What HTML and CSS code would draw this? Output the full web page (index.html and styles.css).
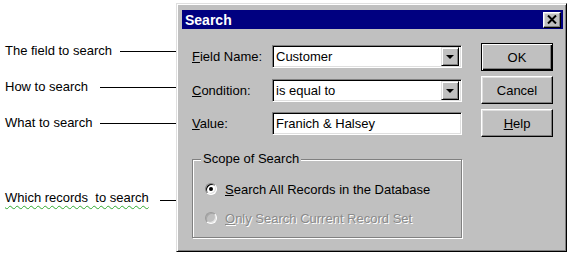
FILE: index.html
```
<!DOCTYPE html>
<html lang="en">

<head>
    <meta charset="UTF-8">
    <title>Search</title>
    <link rel="stylesheet" href="styles.css">
</head>

<body>
    <div class="notes">
        <div class="note note-field">
            <span>The field to search</span>
            <i class="note-line"></i>
        </div>
        <div class="note note-how">
            <span>How to search</span>
            <i class="note-line"></i>
        </div>
        <div class="note note-what">
            <span>What to search</span>
            <i class="note-line"></i>
        </div>
        <div class="note note-which">
            <span class="spell">Which records&nbsp; to search</span>
            <i class="note-line"></i>
        </div>
    </div>

    <div class="dialog">
        <div class="titlebar">
            <span class="title">Search</span>
            <span class="close">
                <svg width="10" height="9" viewBox="0 0 10 9">
                    <path d="M1 0.5 L9 8.5 M9 0.5 L1 8.5" stroke="#000" stroke-width="2" fill="none"/>
                </svg>
            </span>
        </div>

        <div class="body">
            <div class="form">
                <div class="row row-field">
                    <label class="label"><u>F</u>ield Name:</label>
                    <div class="field combo">
                        <span class="value">Customer</span>
                        <span class="drop">
                            <svg width="8" height="4" viewBox="0 0 8 4"><path d="M0 0 H8 L4 4 Z" fill="#000"/></svg>
                        </span>
                    </div>
                </div>
                <div class="row row-cond">
                    <label class="label"><u>C</u>ondition:</label>
                    <div class="field combo">
                        <span class="value">is equal to</span>
                        <span class="drop">
                            <svg width="8" height="4" viewBox="0 0 8 4"><path d="M0 0 H8 L4 4 Z" fill="#000"/></svg>
                        </span>
                    </div>
                </div>
                <div class="row">
                    <label class="label"><u>V</u>alue:</label>
                    <div class="field">
                        <span class="value">Franich &amp; Halsey</span>
                    </div>
                </div>

                <fieldset class="scope">
                    <legend>Scope of Search</legend>
                    <div class="opt opt-all">
                        <span class="radio checked"></span>
                        <span><u>S</u>earch All Records in the Database</span>
                    </div>
                    <div class="opt opt-set disabled">
                        <span class="radio"></span>
                        <span><u>O</u>nly Search Current Record Set</span>
                    </div>
                </fieldset>
            </div>

            <div class="buttons">
                <button class="btn default">OK</button>
                <button class="btn">Cancel</button>
                <button class="btn"><u>H</u>elp</button>
            </div>
        </div>
    </div>
</body>

</html>
```

FILE: styles.css
```
* {
    margin: 0;
    padding: 0;
    box-sizing: border-box;
}

body {
    background: #fff;
    font-family: "Liberation Sans", Arial, sans-serif;
    font-size: 13px;
    color: #000;
    display: flex;
    height: 253px;
    overflow: hidden;
}

/* annotations on the left */
.notes {
    width: 176px;
    flex: none;
    padding: 42px 0 0 5px;
}

.note {
    display: flex;
    align-items: center;
    height: 16px;
    white-space: nowrap;
}

.note-line {
    flex: 1;
    height: 1px;
    background: #000;
    margin-top: 2px;
}

.note-field { margin-bottom: 20px; }
.note-field .note-line { margin-left: 8px; }

.note-how { margin-bottom: 20px; }
.note-how .note-line { margin-left: 12px; }

.note-what { margin-bottom: 59px; }
.note-what .note-line { margin-left: 8px; }

.note-which .note-line { margin-left: 11px; margin-top: 6px; }

.spell {
    text-decoration: underline wavy #2fa82f;
    text-decoration-thickness: 1px;
    text-underline-offset: 3px;
}

/* the dialog window */
.dialog {
    margin-top: 3px;
    width: 391px;
    height: 249px;
    background: #c0c0c0;
    border: 1px solid;
    border-color: #dfdfdf #000 #000 #dfdfdf;
    box-shadow: inset 1px 1px 0 #fff, inset -1px -1px 0 #808080;
    padding: 6px 3px 3px 5px;
}

.titlebar {
    height: 19px;
    background: #000080;
    color: #fff;
    display: flex;
    align-items: center;
    justify-content: space-between;
    padding: 0 2px 0 3px;
}

.title {
    font-weight: bold;
    font-size: 14px;
}

.close {
    width: 18px;
    height: 16px;
    background: #c0c0c0;
    border: 1px solid;
    border-color: #fff #000 #000 #fff;
    box-shadow: inset -1px -1px 0 #808080, inset 1px 1px 0 #dfdfdf;
    display: flex;
    align-items: center;
    justify-content: center;
}

.body {
    display: flex;
    gap: 19px;
    padding: 14px 0 0 10px;
}

.form {
    width: 270px;
    margin-top: 2px;
}

.row {
    display: flex;
    align-items: center;
}

.row-field { margin-bottom: 11px; }
.row-cond { margin-bottom: 10px; }

.label {
    width: 80px;
}

.field {
    width: 190px;
    height: 23px;
    background: #fff;
    border: 1px solid;
    border-color: #808080 #fff #fff #808080;
    box-shadow: inset 1px 1px 0 #000, inset -1px -1px 0 #dfdfdf;
    display: flex;
    align-items: center;
    padding: 0 2px 0 3px;
}

.value {
    flex: 1;
    white-space: nowrap;
}

.drop {
    width: 18px;
    height: 19px;
    background: #c0c0c0;
    border: 1px solid;
    border-color: #dfdfdf #000 #000 #dfdfdf;
    box-shadow: inset 1px 1px 0 #fff, inset -1px -1px 0 #808080;
    display: flex;
    align-items: center;
    justify-content: center;
}

/* scope group */
.scope {
    margin-top: 16px;
    height: 87px;
    border: 1px solid #808080;
    box-shadow: 1px 1px 0 #fff, inset 1px 1px 0 #fff;
    padding: 0 0 10px 0;
}

.scope legend {
    margin-left: 8px;
    padding: 0 2px;
    background: #c0c0c0;
    line-height: 16px;
}

.opt {
    display: flex;
    align-items: center;
    gap: 8px;
    height: 16px;
    padding-left: 12px;
    white-space: nowrap;
}

.opt-all { margin-top: 14px; }
.opt-set { margin-top: 13px; }

.radio {
    position: relative;
    width: 12px;
    height: 12px;
    border-radius: 50%;
    background: #fff;
    border: 1px solid;
    border-color: #808080 #fff #fff #808080;
    box-shadow: inset 1px 1px 0 #000, inset -1px -1px 0 #dfdfdf;
}

.radio.checked::after {
    content: "";
    position: absolute;
    left: 3px;
    top: 3px;
    width: 4px;
    height: 4px;
    border-radius: 50%;
    background: #000;
}

.disabled {
    color: #8a8a8a;
    text-shadow: 1px 1px 0 #fff;
}

.disabled .radio {
    background: #c0c0c0;
    border-color: #9a9a9a #fff #fff #9a9a9a;
    box-shadow: inset 1px 1px 0 #a8a8a8, inset -1px -1px 0 #e4e4e4;
}

/* push buttons */
.buttons {
    display: flex;
    flex-direction: column;
    gap: 5px;
}

.btn {
    width: 72px;
    height: 28px;
    font: inherit;
    color: #000;
    background: #c0c0c0;
    border: 1px solid;
    border-color: #fff #000 #000 #fff;
    box-shadow: inset -1px -1px 0 #808080, inset 1px 1px 0 #dfdfdf;
}

.btn.default {
    border: 1px solid #000;
    box-shadow: inset 1px 1px 0 #fff, inset -1px -1px 0 #000, inset -2px -2px 0 #808080;
}
```
